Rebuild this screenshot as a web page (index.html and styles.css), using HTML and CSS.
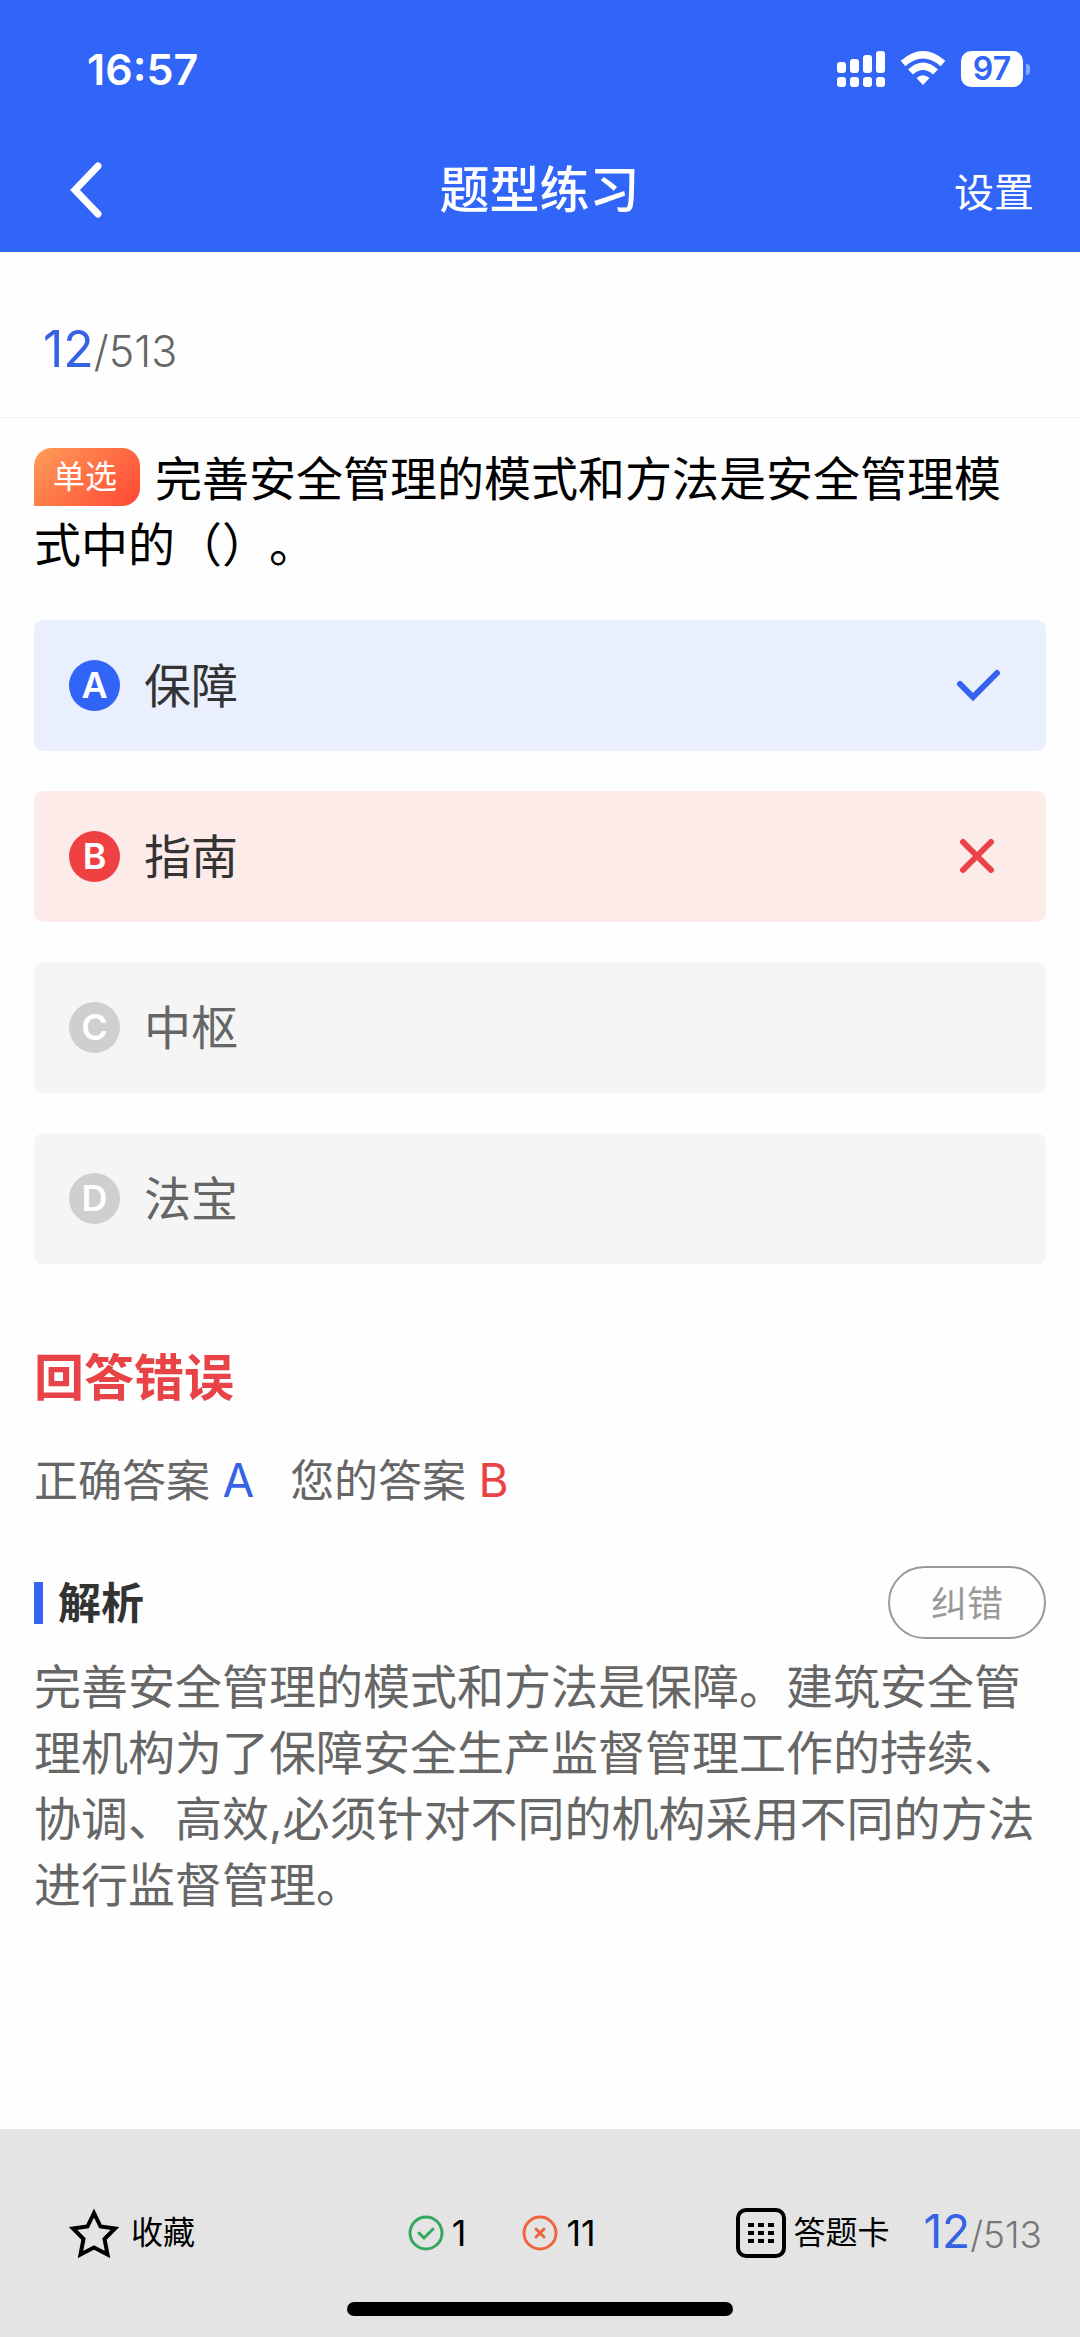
FILE: index.html
```html
<!DOCTYPE html>
<html lang="zh-CN">
	<head>
		<meta charset="utf-8">
		<meta name="viewport" content="width=device-width">
		<title>题型练习</title>
		<link rel="stylesheet" href="styles.css">
	</head>
	<body>
		<header class="header">
			<div class="status">
				<span class="time">16:57</span>
				<div class="status-icons">
					<svg class="signal" width="48" height="36" viewBox="0 0 48 36" fill="#fff">
						<rect x="0" y="11" width="9" height="11" rx="3"/>
						<rect x="13" y="8" width="9" height="14" rx="3"/>
						<rect x="26" y="4" width="9" height="18" rx="3"/>
						<rect x="39" y="0" width="9" height="22" rx="3"/>
						<rect x="0" y="26" width="9" height="10" rx="3"/>
						<rect x="13" y="26" width="9" height="10" rx="3"/>
						<rect x="26" y="26" width="9" height="10" rx="3"/>
						<rect x="39" y="26" width="9" height="10" rx="3"/>
					</svg>
					<svg class="wifi" width="46" height="36" viewBox="0 0 46 36" fill="none" stroke="#fff" stroke-width="7">
						<path d="M3 12.500Q23 -5 43 12.500"/>
						<path d="M10.500 21Q23 9.500 35.500 21"/>
						<path d="M23 34L16.500 27Q23 21.500 29.500 27Z" fill="#fff" stroke="none"/>
					</svg>
					<span class="battery">97</span>
				</div>
			</div>
			<nav class="nav">
				<button class="back" type="button" aria-label="返回">
					<svg width="34" height="56" viewBox="0 0 34 56" fill="none" stroke="#fff" stroke-width="7" stroke-linecap="round">
						<path d="M29 4L6 28L29 52"/>
					</svg>
				</button>
				<h1>题型练习</h1>
				<button class="setting" type="button">设置</button>
			</nav>
		</header>

		<div class="progress"><b>12</b>/513</div>

		<main class="main">
			<p class="question"><span class="tag">单选</span>完善安全管理的模式和方法是安全管理模式中的（）。</p>

			<div class="options">
				<button class="option right" type="button">
					<i>A</i><span>保障</span>
					<svg width="48" height="48" viewBox="0 0 48 48" fill="none" stroke="#3663ee" stroke-width="6" stroke-linecap="round">
						<path d="M6 22L19 35L43 11"/>
					</svg>
				</button>
				<button class="option wrong" type="button">
					<i>B</i><span>指南</span>
					<svg width="48" height="48" viewBox="0 0 48 48" fill="none" stroke="#ea4346" stroke-width="6" stroke-linecap="round">
						<path d="M9 9L37 37M37 9L9 37"/>
					</svg>
				</button>
				<button class="option" type="button"><i>C</i><span>中枢</span></button>
				<button class="option" type="button"><i>D</i><span>法宝</span></button>
			</div>

			<h2 class="result">回答错误</h2>
			<div class="answer">
				<span>正确答案 <b class="blue">A</b></span>
				<span>您的答案 <b class="red">B</b></span>
			</div>

			<div class="analysis-top">
				<h3>解析</h3>
				<button class="fix" type="button">纠错</button>
			</div>
			<p class="analysis">完善安全管理的模式和方法是保障。建筑安全管理机构为了保障安全生产监督管理工作的持续、协调、高效,必须针对不同的机构采用不同的方法进行监督管理。</p>
		</main>

		<footer class="footer">
			<div class="tools">
				<button class="tool fav" type="button">
					<svg width="50" height="50" viewBox="0 0 50 50" fill="none" stroke="#000" stroke-width="4">
						<path d="M25 5L31.500 18.500L46 20.500L35.500 31L38.500 46.500L25 39.500L11.500 46.500L14.500 31L4 20.500L18.500 18.500Z"/>
					</svg>
					收藏
				</button>
				<div class="stats">
					<span>
						<svg width="36" height="36" viewBox="0 0 36 36" fill="none" stroke="#34a85e" stroke-width="3" stroke-linecap="round">
							<circle cx="18" cy="18" r="16"/>
							<path d="M11 18L16 23L25 14"/>
						</svg>
						1
					</span>
					<span>
						<svg width="36" height="36" viewBox="0 0 36 36" fill="none" stroke="#f0643f" stroke-width="3" stroke-linecap="round">
							<circle cx="18" cy="18" r="16"/>
							<path d="M14 14L22 22M22 14L14 22"/>
						</svg>
						11
					</span>
				</div>
				<button class="tool card" type="button">
					<svg width="50" height="50" viewBox="0 0 50 50" fill="none" stroke="#000">
						<rect x="2" y="2" width="46" height="46" rx="8" stroke-width="4"/>
						<path d="M12 17H38M12 25H38M12 33H38" stroke-width="4" stroke-dasharray="6 4"/>
					</svg>
					答题卡
				</button>
				<div class="count"><b>12</b>/513</div>
			</div>
			<div class="home-bar"></div>
		</footer>
	</body>
</html>
```

FILE: styles.css
```css
* {margin:0; padding:0; box-sizing:border-box; }
body{
	min-height: 100vh;
	display: flex;
	flex-direction: column;
	background: #fefefe;
	color: #666;
	font-family: Inter, "Noto Sans CJK SC", sans-serif;
	text-spacing-trim: space-all;
}
button{
	border: 0;
	background: none;
	font: inherit;
	color: inherit;
	cursor: pointer;
}
b, i{
	font-weight: 400;
	font-style: normal;
}
svg{
	display: block;
	flex: none;
}

/* header */
.header{
	background: #3165f8;
	color: #fff;
}
.status{
	height: 128px;
	padding: 10px 50px 0 87px;
	display: flex;
	align-items: center;
	justify-content: space-between;
}
.time{
	font-size: 43px;
	font-weight: 600;
}
.status-icons{
	display: flex;
	align-items: center;
	gap: 15px;
}
.battery{
	position: relative;
	width: 62px;
	height: 36px;
	margin-right: 7px;
	border-radius: 10px;
	background: #fff;
	color: #3165f8;
	font-size: 32px;
	font-weight: 600;
	line-height: 36px;
	text-align: center;
}
.battery::after{
	content: "";
	position: absolute;
	right: -7px;
	top: 13px;
	width: 4px;
	height: 11px;
	border-radius: 0 4px 4px 0;
	background: #89a8fb;
}
.nav{
	height: 124px;
	padding: 0 46px 0 69px;
	display: grid;
	grid-template-columns: 1fr auto 1fr;
	align-items: center;
}
.nav h1{
	margin-right: 24px;
	font-size: 50px;
	font-weight: 500;
	line-height: 66px;
}
.back{justify-self: start;}
.setting{
	justify-self: end;
	font-size: 40px;
}

/* progress */
.progress{
	height: 166px;
	padding: 0 43px;
	border-bottom: 1px solid #f3f3f3;
	font-size: 43px;
	font-weight: 300;
	line-height: 194px;
}
.progress b{
	font-size: 50px;
	color: #3663e4;
}

/* question */
.main{
	flex: 1;
	padding: 28px 34px;
}
.question{
	font-size: 47px;
	line-height: 66px;
	color: #000;
}
.tag{
	display: inline-block;
	width: 106px;
	height: 58px;
	margin: 2px 15px 0 0;
	padding-right: 4px;
	border-radius: 18px 18px 18px 0;
	background: linear-gradient(135deg, #ff9c58, #ff4733);
	color: #fff;
	font-size: 32px;
	line-height: 58px;
	text-align: center;
	vertical-align: top;
}
.options{
	margin-top: 42px;
	display: grid;
	gap: 40px;
}
.option{
	height: 131px;
	padding: 0 44px 0 35px;
	border-radius: 9px;
	background: #f5f5f5;
	display: flex;
	align-items: center;
	font-size: 47px;
	line-height: 66px;
}
.option i{
	width: 51px;
	height: 51px;
	margin-right: 24px;
	border-radius: 50%;
	background: #d0cfd0;
	color: #fff;
	font-size: 36px;
	font-weight: 600;
	line-height: 51px;
}
.option svg{margin-left: auto;}
.option.right{
	background: #e9effd;
	color: #333;
}
.option.right i{background: #3165f8;}
.option.wrong{
	background: #fdebea;
	color: #333;
}
.option.wrong i{background: #f04142;}

/* result */
.result{
	margin-top: 81px;
	font-size: 50px;
	line-height: 66px;
	color: #e84346;
}
.answer{
	margin-top: 36px;
	display: flex;
	gap: 36px;
	font-size: 44px;
	line-height: 66px;
}
.answer b{font-size: 46px;}
.blue{color: #3663e4;}
.red{color: #e84346;}
.analysis-top{
	margin-top: 52px;
	display: flex;
	align-items: center;
	justify-content: space-between;
}
.analysis-top h3{
	display: flex;
	align-items: center;
	gap: 15px;
	color: #333;
	font-size: 43px;
	line-height: 66px;
}
.analysis-top h3::before{
	content: "";
	width: 9px;
	height: 42px;
	background: #3663f0;
}
.fix{
	width: 158px;
	height: 73px;
	padding-bottom: 4px;
	border: 2px solid #999;
	border-radius: 37px;
	color: #999;
	font-size: 36px;
}
.analysis{
	margin-top: 15px;
	font-size: 47px;
	line-height: 66px;
}

/* footer */
.footer{
	padding: 78px 0 21px;
	background: #e4e4e4;
}
.tools{
	height: 50px;
	padding: 0 38px 0 69px;
	display: grid;
	grid-template-columns: auto 1fr auto auto;
	align-items: center;
	color: #000;
}
.tool{
	display: flex;
	align-items: center;
	font-size: 32px;
	line-height: 48px;
}
.fav{gap: 12px;}
.card{gap: 7px;}
.stats{
	padding-left: 72px;
	display: flex;
	justify-content: center;
	gap: 56px;
	font-size: 36px;
}
.stats span{
	display: flex;
	align-items: center;
	gap: 8px;
}
.count{
	margin-left: 34px;
	color: #777;
	font-size: 37px;
	font-weight: 300;
	line-height: 48px;
}
.count b{
	font-size: 46px;
	color: #3663e4;
}
.home-bar{
	width: 386px;
	height: 14px;
	margin: 45px auto 0;
	border-radius: 7px;
	background: #000;
}
```
